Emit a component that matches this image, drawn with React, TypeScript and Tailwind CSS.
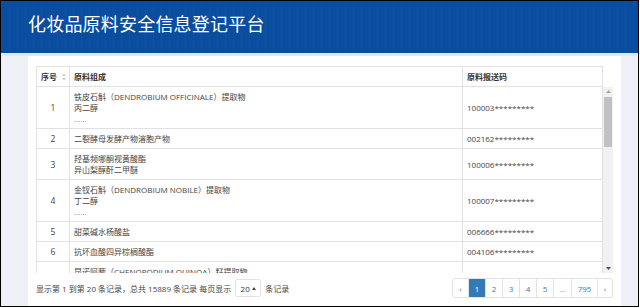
import React from 'react';

type Row = { no: number | null; lines: string[]; code: string };

const rows: Row[] = [
  { no: 1, lines: ['铁皮石斛（DENDROBIUM OFFICINALE）提取物', '丙二醇', '......'], code: '100003*********' },
  { no: 2, lines: ['二裂酵母发酵产物溶胞产物'], code: '002162*********' },
  { no: 3, lines: ['羟基频哪酮视黄酸酯', '异山梨醇酐二甲醚'], code: '100006*********' },
  { no: 4, lines: ['金钗石斛（DENDROBIUM NOBILE）提取物', '丁二醇', '......'], code: '100007*********' },
  { no: 5, lines: ['甜菜碱水杨酸盐'], code: '006666*********' },
  { no: 6, lines: ['抗坏血酸四异棕榈酸酯'], code: '004106*********' },
  // partly scrolled out of view, only its first line shows
  { no: null, lines: ['昆诺阿藜（CHENOPODIUM QUINOA）籽提取物'], code: '' },
];

const pages = ['‹', '1', '2', '3', '4', '5', '…', '795', '›'];
const pageWidths = ['w-[15px]', 'w-[17px]', 'w-[17px]', 'w-[17px]', 'w-[17px]', 'w-[17px]', 'w-[18px]', 'w-[26px]', 'w-[15px]'];

const SortIcon = () => (
  <svg width="4" height="8" viewBox="0 0 4 8" className="text-[#c8c8c8]">
    <path d="M2 0.5 L3.8 3 H0.2 Z" fill="currentColor" />
    <path d="M2 7.5 L3.8 5 H0.2 Z" fill="currentColor" />
  </svg>
);

export default function App() {
  return (
    <div className="w-[640px] h-[308px] bg-white font-['Open_Sans','Noto_Sans_CJK_SC',sans-serif]">
      <div className="w-[639px] h-[307px] border border-black flex flex-col bg-[#edf1f5] overflow-hidden">
        <header className="h-[52px] shrink-0 bg-[#0a4c9d] bg-[repeating-linear-gradient(90deg,rgba(255,255,255,0.025)_0_1px,transparent_1px_8px)] flex items-center pl-[27px]">
          <h1 className="text-[18px] text-white leading-none tracking-[0.2px] font-['Noto_Sans_CJK_SC',sans-serif] mb-[8px]">
            化妆品原料安全信息登记平台
          </h1>
        </header>
        <div className="h-[3px] shrink-0 bg-[#e3e8ef]" />
        <div className="flex-1 flex pl-[27px] pr-[16px]">
          <div className="w-[593px] bg-white px-[8px] pt-[10px] text-[8px] leading-[11px] text-[#444]">
            {/* fixed header */}
            <div className="flex w-[567px] h-[21px] border border-[#e2e2e2] font-bold text-[#333]">
              <div className="w-[33px] border-r border-[#e2e2e2] flex items-center justify-between pl-[4px] pr-[3px]">
                <span>序号</span>
                <SortIcon />
              </div>
              <div className="w-[393px] border-r border-[#e2e2e2] flex items-center pl-[4px]">原料组成</div>
              <div className="flex-1 flex items-center pl-[4px]">原料报送码</div>
            </div>

            {/* scroll body */}
            <div className="flex h-[186px]">
              <div className="w-[567px] border-l border-r border-[#e2e2e2] overflow-hidden">
                {rows.map((r, idx) => (
                  <div key={idx} className="flex border-b border-[#e2e2e2]">
                    <div className="w-[33px] shrink-0 border-r border-[#e2e2e2] flex items-center justify-center text-[8.5px]">
                      {r.no}
                    </div>
                    <div className="w-[393px] shrink-0 border-r border-[#e2e2e2] py-[4px] pl-[4px]">
                      {r.lines.map((l, i) => (
                        <div key={i} className={l === '......' ? 'text-[#888]' : ''}>{l}</div>
                      ))}
                    </div>
                    <div className="flex-1 flex items-center pl-[4px]">{r.code}</div>
                  </div>
                ))}
              </div>
              <div className="w-[10px] bg-[#f1f1f1] flex flex-col items-center">
                <svg width="5" height="3" viewBox="0 0 5 3" className="mt-[3px] text-[#a3a3a3]">
                  <path d="M2.5 0 L5 3 H0 Z" fill="currentColor" />
                </svg>
                <div className="w-[8px] h-[50px] mt-[4px] bg-[#c1c1c1]" />
                <div className="flex-1" />
                <svg width="5" height="3" viewBox="0 0 5 3" className="mb-[3px] text-[#505050]">
                  <path d="M0 0 H5 L2.5 3 Z" fill="currentColor" />
                </svg>
              </div>
            </div>

            {/* footer */}
            <div className="flex items-center justify-between mt-[5px] h-[20px] whitespace-nowrap">
              <div className="flex items-center gap-[4px] text-[#444]">
                <span>显示第 1 到第 20 条记录，总共 15889 条记录 每页显示</span>
                <span className="w-[26px] h-[18px] border border-[#e2e2e2] rounded-[2px] flex items-center justify-center gap-[2px] text-[#333]">
                  <span>20</span>
                  <svg width="4" height="3" viewBox="0 0 4 3">
                    <path d="M2 0 L4 3 H0 Z" fill="#444" />
                  </svg>
                </span>
                <span>条记录</span>
              </div>
              <div className="flex h-[20px] border border-[#e2e2e2] rounded-[3px] overflow-hidden">
                {pages.map((p, i) => (
                  <div
                    key={i}
                    className={`${pageWidths[i]} flex items-center justify-center ${i > 0 ? 'border-l border-[#e2e2e2]' : ''} ${
                      p === '1' ? 'bg-[#337ab7] text-white' : p === '…' ? 'text-[#999]' : 'text-[#337ab7]'
                    }`}
                  >
                    {p}
                  </div>
                ))}
              </div>
            </div>
          </div>
        </div>
      </div>
    </div>
  );
}
